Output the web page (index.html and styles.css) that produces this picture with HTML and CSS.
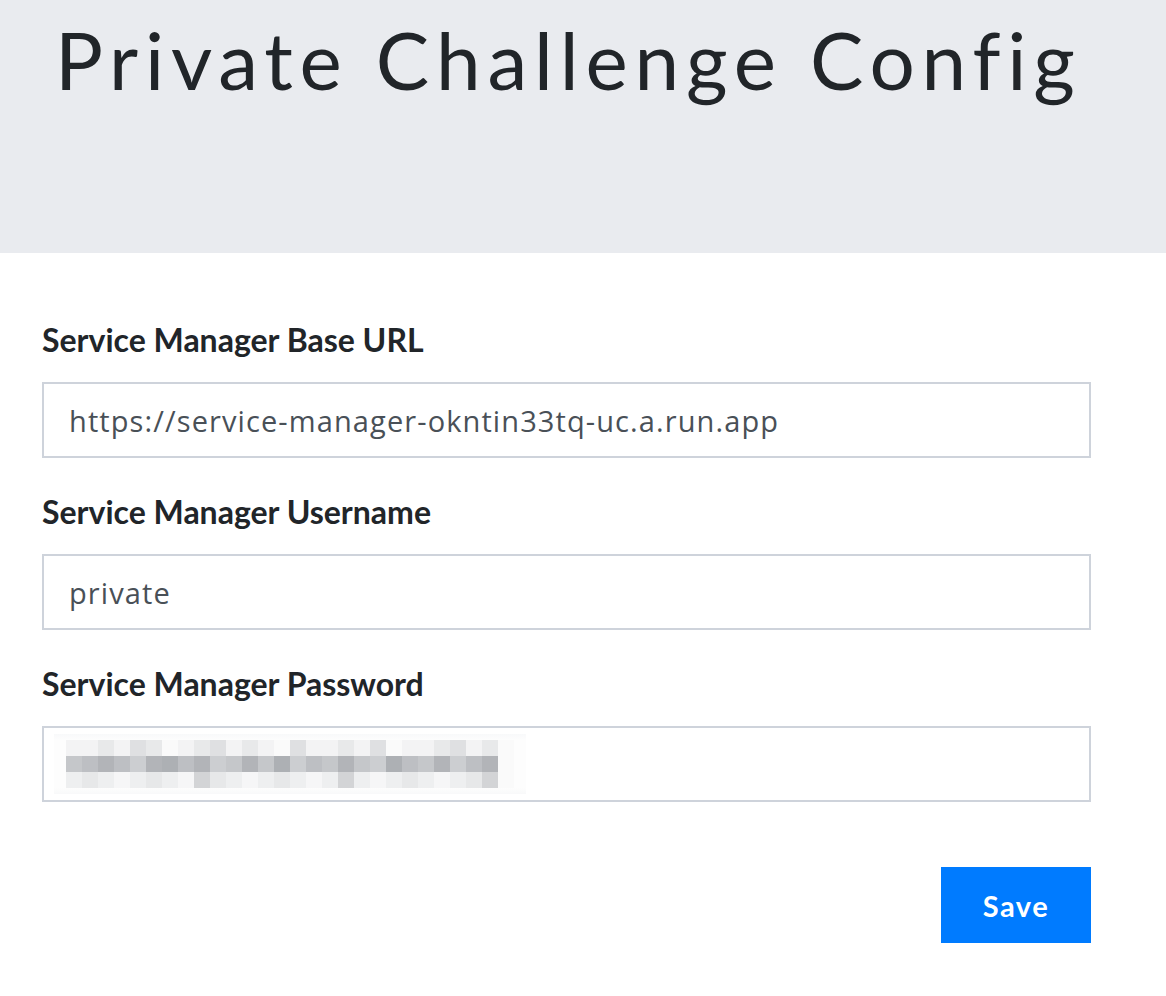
FILE: index.html
```html
<!DOCTYPE html>
<html>
<head>
<meta charset="utf-8">
<link rel="stylesheet" href="styles.css">
</head>
<body>
<header class="hero">
  <h1 class="title">Private Challenge Config</h1>
</header>
<main class="content">
  <form class="form">
    <div class="field">
      <label class="label">Service Manager Base URL</label>
      <div class="input">https://service-manager-okntin33tq-uc.a.run.app</div>
    </div>
    <div class="field">
      <label class="label">Service Manager Username</label>
      <div class="input">private</div>
    </div>
    <div class="field">
      <label class="label">Service Manager Password</label>
      <div class="input input-pw">
        <div class="blur">
          <div class="row r1"><i></i><i></i><i></i><i></i><i></i><i></i><i></i><i></i><i></i><i></i><i></i><i></i><i></i><i></i><i></i><i></i><i></i><i></i><i></i><i></i><i></i><i></i><i></i><i></i><i></i><i></i><i></i><i></i></div>
          <div class="row r2"><i></i><i></i><i></i><i></i><i></i><i></i><i></i><i></i><i></i><i></i><i></i><i></i><i></i><i></i><i></i><i></i><i></i><i></i><i></i><i></i><i></i><i></i><i></i><i></i><i></i><i></i><i></i><i></i></div>
          <div class="row r3"><i></i><i></i><i></i><i></i><i></i><i></i><i></i><i></i><i></i><i></i><i></i><i></i><i></i><i></i><i></i><i></i><i></i><i></i><i></i><i></i><i></i><i></i><i></i><i></i><i></i><i></i><i></i><i></i></div>
        </div>
      </div>
    </div>
    <div class="actions">
      <button type="button" class="btn">Save</button>
    </div>
  </form>
</main>
</body>
</html>
```

FILE: styles.css
```css
html, body {
  margin: 0;
  padding: 0;
  background: #ffffff;
}
body {
  font-family: "Lato", "Open Sans", sans-serif;
  color: #212529;
}
.hero {
  background: #e9ebef;
  height: 253px;
  box-sizing: border-box;
  padding: 9px 0 0 55px;
}
.title {
  margin: 0;
  font-family: "Lato", sans-serif;
  font-weight: 400;
  font-size: 80px;
  line-height: 100px;
  letter-spacing: 6.8px;
  color: #212529;
}
.content {
  padding: 67px 75px 0 42px;
}
.form {
  display: flex;
  flex-direction: column;
}
.field {
  display: flex;
  flex-direction: column;
  margin-bottom: 34px;
}
.label {
  font-family: "Lato", sans-serif;
  font-weight: 700;
  font-size: 32px;
  line-height: 40px;
  margin-bottom: 22px;
  color: #212529;
}
.input {
  height: 76px;
  box-sizing: border-box;
  border: 2px solid #ced3db;
  padding: 0 25px;
  display: flex;
  align-items: center;
  font-family: "Open Sans", sans-serif;
  font-size: 29px;
  letter-spacing: 1.1px;
  color: #495057;
  background: #fff;
}
.input-pw {
  padding: 0 0 0 10px;
}
.blur {
  display: flex;
  flex-direction: column;
  padding: 6px 12px;
  background: linear-gradient(#f8f9fa, #fdfdfd 10%, #fdfdfd 90%, #f8f9fa);
}
.row {
  display: flex;
}
.row i {
  display: block;
  width: 16px;
  height: 16px;
}
.r1 i { background: #f3f3f4; }
.r1 i:nth-child(3n) { background: #e8e9ea; }
.r1 i:nth-child(5n) { background: #dfe0e2; }
.r1 i:nth-child(7n) { background: #fafafa; }
.r2 i { background: #c5c7ca; }
.r2 i:nth-child(2n) { background: #bdbfc3; }
.r2 i:nth-child(3n) { background: #b2b4b8; }
.r2 i:nth-child(5n) { background: #ccced1; }
.r2 i:nth-child(7n) { background: #adb0b4; }
.r3 i { background: #eeeff0; }
.r3 i:nth-child(2n) { background: #e7e8e9; }
.r3 i:nth-child(4n) { background: #f6f6f7; }
.r3 i:nth-child(9n) { background: #d3d4d6; }
.row i:last-child { background: #fafafa; }
.actions {
  display: flex;
  justify-content: flex-end;
  margin-top: 31px;
}
.btn {
  width: 150px;
  height: 76px;
  border: none;
  border-radius: 0;
  background: #007bff;
  color: #fff;
  font-family: "Lato", sans-serif;
  font-weight: 700;
  font-size: 29px;
  letter-spacing: 1.5px;
  cursor: pointer;
}
```
